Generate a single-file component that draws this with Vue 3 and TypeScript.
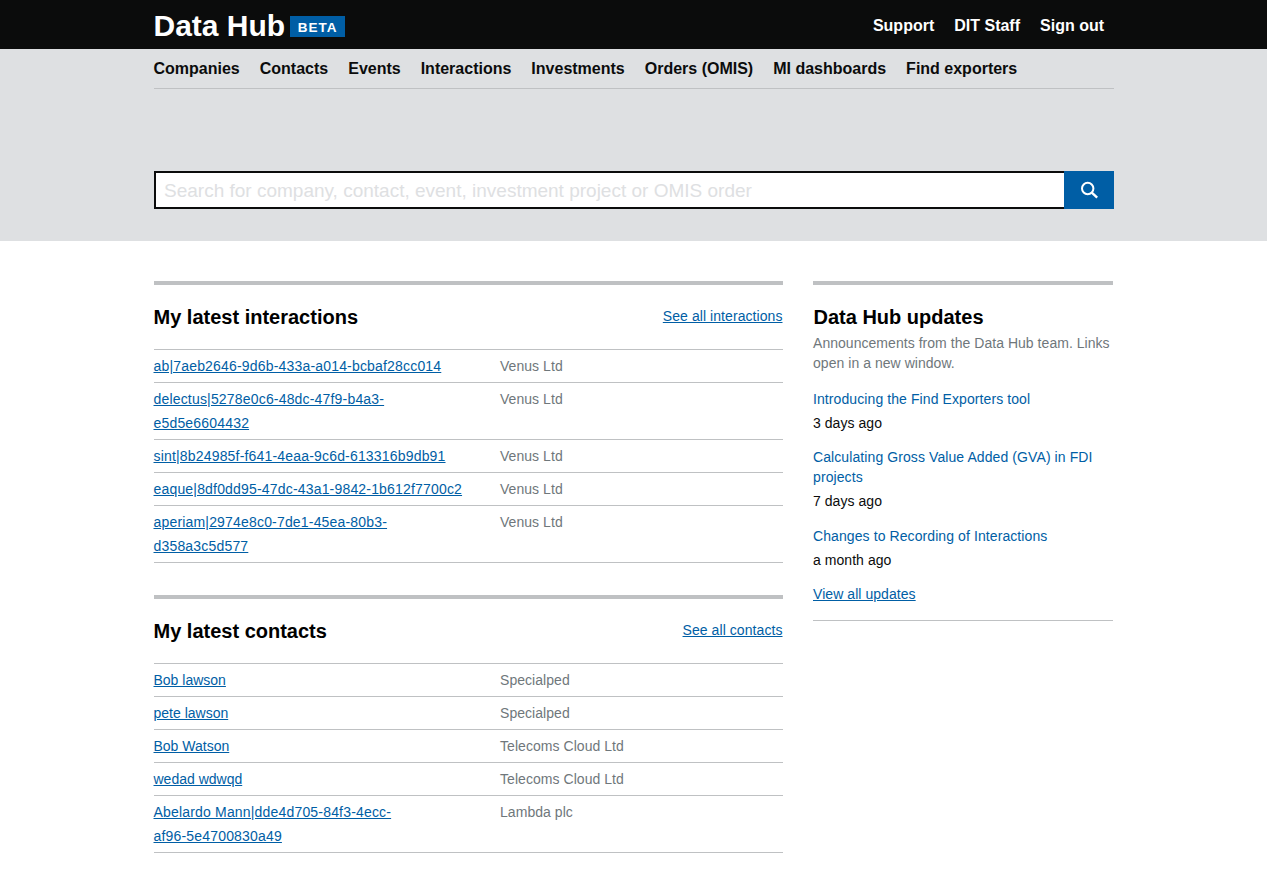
<script setup lang="ts">
const navItems = ['Companies', 'Contacts', 'Events', 'Interactions', 'Investments', 'Orders (OMIS)', 'MI dashboards', 'Find exporters']
const headerLinks = ['Support', 'DIT Staff', 'Sign out']

const interactions = [
  { name: 'ab|7aeb2646-9d6b-433a-a014-bcbaf28cc014', company: 'Venus Ltd' },
  { name: 'delectus|5278e0c6-48dc-47f9-b4a3-e5d5e6604432', company: 'Venus Ltd' },
  { name: 'sint|8b24985f-f641-4eaa-9c6d-613316b9db91', company: 'Venus Ltd' },
  { name: 'eaque|8df0dd95-47dc-43a1-9842-1b612f7700c2', company: 'Venus Ltd' },
  { name: 'aperiam|2974e8c0-7de1-45ea-80b3-d358a3c5d577', company: 'Venus Ltd' }
]

const contacts = [
  { name: 'Bob lawson', company: 'Specialped' },
  { name: 'pete lawson', company: 'Specialped' },
  { name: 'Bob Watson', company: 'Telecoms Cloud Ltd' },
  { name: 'wedad wdwqd', company: 'Telecoms Cloud Ltd' },
  { name: 'Abelardo Mann|dde4d705-84f3-4ecc-af96-5e4700830a49', company: 'Lambda plc', narrow: true }
]

const updates = [
  { title: 'Introducing the Find Exporters tool', when: '3 days ago' },
  { title: 'Calculating Gross Value Added (GVA) in FDI projects', when: '7 days ago' },
  { title: 'Changes to Recording of Interactions', when: 'a month ago' }
]

const sections = [
  { title: 'My latest interactions', more: 'See all interactions', rows: interactions },
  { title: 'My latest contacts', more: 'See all contacts', rows: contacts }
]
</script>

<template>
  <div class="page">
    <header class="topbar">
      <div class="wrap topbar__inner">
        <div class="brand">
          <span class="brand__name">Data Hub</span>
          <span class="brand__tag">BETA</span>
        </div>
        <nav class="topbar__links">
          <a v-for="link in headerLinks" :key="link" href="#">{{ link }}</a>
        </nav>
      </div>
    </header>

    <section class="hero">
      <div class="wrap">
        <nav class="mainnav">
          <a v-for="item in navItems" :key="item" href="#">{{ item }}</a>
        </nav>
        <form class="search" @submit.prevent>
          <input class="search__input" type="text" placeholder="Search for company, contact, event, investment project or OMIS order" />
          <button class="search__button" type="submit" aria-label="Search">
            <svg width="18" height="18" viewBox="0 0 18 18" fill="none" stroke="#fff" stroke-width="2">
              <circle cx="7.7" cy="7.5" r="5.7" />
              <path d="M11.8 11.6 L17.2 16.7" stroke-width="2.4" />
            </svg>
          </button>
        </form>
      </div>
    </section>

    <main class="wrap content">
      <div class="content__main">
        <section v-for="section in sections" :key="section.title" class="block">
          <div class="block__head">
            <h2>{{ section.title }}</h2>
            <a href="#">{{ section.more }}</a>
          </div>
          <ul class="rows">
            <li v-for="row in section.rows" :key="row.name" class="row">
              <div class="row__name">
                <a
                  href="#"
                  :class="{ 'row__link--id': row.name.includes('|'), 'row__link--narrow': 'narrow' in row }"
                >{{ row.name }}</a>
              </div>
              <div class="row__company">{{ row.company }}</div>
            </li>
          </ul>
        </section>
      </div>

      <aside class="updates">
        <h2>Data Hub updates</h2>
        <p class="updates__intro">Announcements from the Data Hub team. Links open in a new window.</p>
        <div v-for="update in updates" :key="update.title" class="update">
          <a href="#">{{ update.title }}</a>
          <div class="update__when">{{ update.when }}</div>
        </div>
        <a class="updates__all" href="#">View all updates</a>
      </aside>
    </main>
  </div>
</template>

<style>
body {
  background: #fff;
}
</style>

<style scoped>
.page {
  width: 1267px;
  font-family: "Liberation Sans", Arial, sans-serif;
  color: #0b0c0c;
}

.wrap {
  width: 960px;
  margin: 0 auto;
}

.topbar {
  height: 49px;
  background: #0b0c0c;
}

.topbar__inner {
  display: flex;
  justify-content: space-between;
  align-items: center;
  height: 49px;
}

.brand {
  display: flex;
  align-items: flex-start;
  height: 49px;
}

.brand__name {
  margin-top: 8px;
  font-size: 30px;
  line-height: 35px;
  font-weight: 700;
  color: #fff;
}

.brand__tag {
  margin: 16px 0 0 5px;
  width: 55px;
  height: 21px;
  background: #005ea5;
  color: #fff;
  font-size: 13.5px;
  line-height: 23px;
  font-weight: 700;
  letter-spacing: 1px;
  text-align: center;
}

.topbar__links {
  display: flex;
  gap: 20px;
  padding: 2px 9.5px 0 0;
}

.topbar__links a {
  color: #fff;
  font-size: 16px;
  line-height: 20px;
  font-weight: 700;
  text-decoration: none;
}

.hero {
  height: 192px;
  background: #dee0e2;
}

.mainnav {
  display: flex;
  gap: 20px;
  height: 39px;
  border-bottom: 1px solid #bfc1c3;
  line-height: 39px;
}

.mainnav a {
  color: #0b0c0c;
  font-size: 16px;
  font-weight: 700;
  text-decoration: none;
}

.search {
  display: flex;
  height: 38px;
  margin-top: 82px;
}

.search__input {
  flex: 1;
  min-width: 0;
  box-sizing: border-box;
  height: 38px;
  padding: 1px 8px 0 8.5px;
  border: 2px solid #0b0c0c;
  border-right: 0;
  border-radius: 0;
  outline: 0;
  background: #fff;
  font-family: inherit;
  font-size: 19px;
}

.search__input::placeholder {
  color: #dee0e2;
  opacity: 1;
}

.search__button {
  display: flex;
  align-items: center;
  justify-content: center;
  width: 50px;
  height: 38px;
  padding: 0;
  border: 0;
  background: #005ea5;
}

.content {
  display: flex;
  gap: 30.5px;
  padding-top: 40px;
}

.content__main {
  width: 629px;
}

.block {
  margin-bottom: 32px;
  border-top: 4px solid #bfc1c3;
}

.block__head {
  display: flex;
  justify-content: space-between;
  align-items: center;
  height: 64px;
}

.block__head a {
  margin-bottom: 2px;
  letter-spacing: 0.07px;
}

h2 {
  margin: 0;
  font-size: 20px;
  line-height: 24px;
  font-weight: 700;
  color: #000;
}

a {
  color: #005ea5;
}

.block__head a,
.row,
.updates {
  font-size: 14px;
  line-height: 24px;
}

.rows {
  margin: 0;
  padding: 0;
  list-style: none;
  border-top: 1px solid #bfc1c3;
}

.row {
  display: flex;
  padding: 4px 0;
  border-bottom: 1px solid #bfc1c3;
}

.row__name {
  width: 316px;
  margin-right: 30.5px;
}

.row__link--id {
  letter-spacing: 0.18px;
}

.row__link--narrow {
  display: inline-block;
  max-width: 260px;
  letter-spacing: 0.18px;
}

.row__company {
  color: #6f777b;
  letter-spacing: 0.05px;
}

.updates {
  width: 300px;
  height: 340px;
  box-sizing: border-box;
  padding-top: 20px;
  border-top: 4px solid #bfc1c3;
  border-bottom: 1px solid #bfc1c3;
}

.updates h2 {
  padding-left: 0.5px;
}

.updates__intro {
  margin: 4px 0 16px;
  color: #6f777b;
  line-height: 20px;
  letter-spacing: 0.04px;
}

.update {
  margin-bottom: 14.4px;
  line-height: 20px;
}

.update a {
  letter-spacing: 0.09px;
  text-decoration: none;
}

.update__when {
  margin-top: 4px;
  color: #0b0c0c;
  letter-spacing: 0.05px;
}

.updates__all {
  display: block;
  margin-top: -2px;
  letter-spacing: 0.06px;
}
</style>
